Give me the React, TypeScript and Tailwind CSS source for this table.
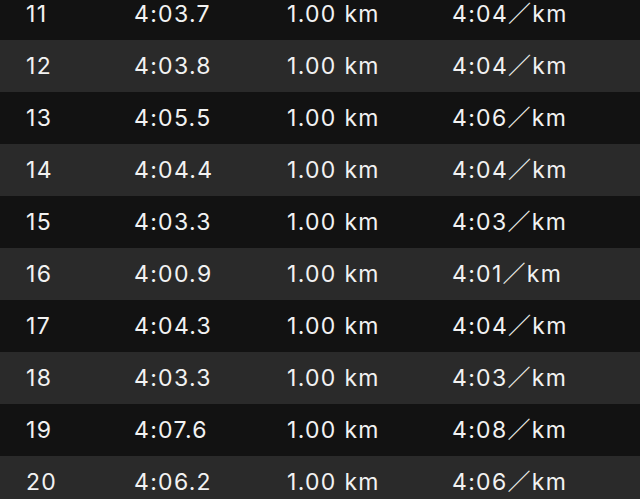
import React from 'react';

const splits = [
    { km: 11, time: '4:03.7', pace: '4:04' },
    { km: 12, time: '4:03.8', pace: '4:04' },
    { km: 13, time: '4:05.5', pace: '4:06' },
    { km: 14, time: '4:04.4', pace: '4:04' },
    { km: 15, time: '4:03.3', pace: '4:03' },
    { km: 16, time: '4:00.9', pace: '4:01' },
    { km: 17, time: '4:04.3', pace: '4:04' },
    { km: 18, time: '4:03.3', pace: '4:03' },
    { km: 19, time: '4:07.6', pace: '4:08' },
    { km: 20, time: '4:06.2', pace: '4:06' },
];

export default function App() {
    return (
        <div className="h-[499px] w-[640px] overflow-hidden bg-[#121212] font-['Inter','Noto_Sans_CJK_JP',sans-serif] text-[23px] tracking-[1.3px] text-[#f2f2f2]">
            <div className="-mt-[12px]">
                {splits.map((s, i) => (
                    <div key={s.km} className={`flex h-[52px] items-center ${i % 2 === 1 ? 'bg-[#2a2a2a]' : 'bg-[#121212]'}`}>
                        <span className="w-[134px] pl-[26px]">{s.km}</span>
                        <span className="w-[153px]">{s.time}</span>
                        <span className="w-[165px]">1.00 km</span>
                        <span>{s.pace}／km</span>
                    </div>
                ))}
            </div>
        </div>
    );
}
